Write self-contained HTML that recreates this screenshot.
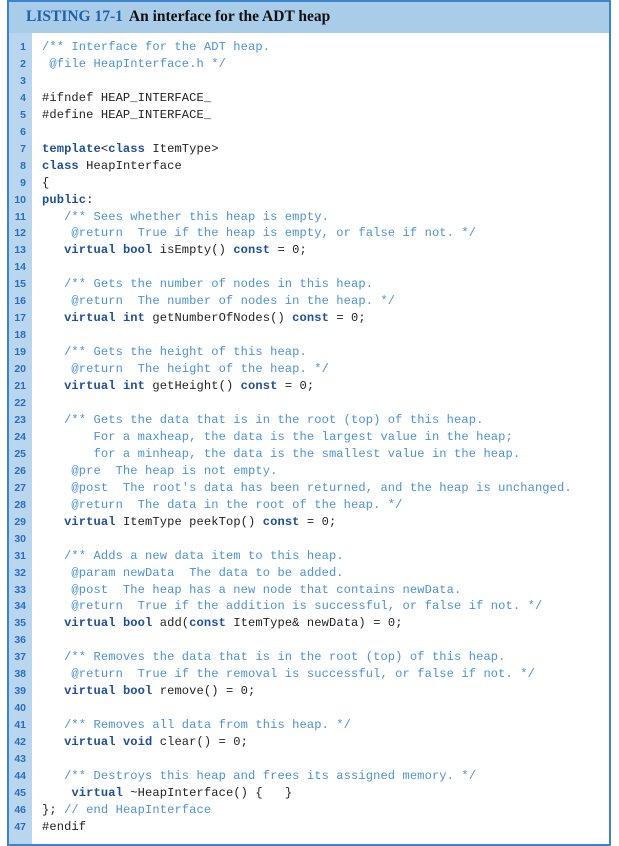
<!DOCTYPE html>
<html><head><meta charset="utf-8"><style>
html,body{margin:0;padding:0;background:#fff;}
body{width:619px;height:845px;position:relative;overflow:hidden;}
.frame{position:absolute;left:7px;top:0;width:600px;height:842px;border:2px solid #3d84cf;background:#fff;}
.hdr{position:absolute;left:0;top:0;right:0;height:31px;background:#a9cde9;}
.hdr span{position:absolute;left:17px;top:6px;font:bold 15.5px "Liberation Serif",serif;color:#1f5fae;white-space:nowrap;}
.hdr b{color:#111;margin-left:6px;}
.gut{position:absolute;left:0;top:31px;width:23px;bottom:0;background:#b9d6ee;}
.nums{position:absolute;left:0;top:37px;width:17px;text-align:right;font:bold 10.5px "Liberation Sans",sans-serif;color:#2a6dbf;line-height:16.96px;}
pre{position:absolute;left:33px;top:37px;margin:0;font:12.1px "Liberation Mono",monospace;letter-spacing:0.1px;line-height:16.96px;color:#222;}
.c{color:#4b93d6;}
.k{color:#1d4f9a;font-weight:bold;}
</style></head><body>
<div class="frame">
<div class="hdr"><span>LISTING 17-1<b>An interface for the ADT heap</b></span></div>
<div class="gut"></div>
<div class="nums">1<br>2<br>3<br>4<br>5<br>6<br>7<br>8<br>9<br>10<br>11<br>12<br>13<br>14<br>15<br>16<br>17<br>18<br>19<br>20<br>21<br>22<br>23<br>24<br>25<br>26<br>27<br>28<br>29<br>30<br>31<br>32<br>33<br>34<br>35<br>36<br>37<br>38<br>39<br>40<br>41<br>42<br>43<br>44<br>45<br>46<br>47</div>
<pre><span class="c">/** Interface for the ADT heap.
 @file HeapInterface.h */</span>

#ifndef HEAP_INTERFACE_
#define HEAP_INTERFACE_

<span class="k">template</span>&lt;<span class="k">class</span> ItemType&gt;
<span class="k">class</span> HeapInterface
{
<span class="k">public</span>:
   <span class="c">/** Sees whether this heap is empty.
    @return  True if the heap is empty, or false if not. */</span>
   <span class="k">virtual bool</span> isEmpty() <span class="k">const</span> = 0;

   <span class="c">/** Gets the number of nodes in this heap.
    @return  The number of nodes in the heap. */</span>
   <span class="k">virtual int</span> getNumberOfNodes() <span class="k">const</span> = 0;

   <span class="c">/** Gets the height of this heap.
    @return  The height of the heap. */</span>
   <span class="k">virtual int</span> getHeight() <span class="k">const</span> = 0;

   <span class="c">/** Gets the data that is in the root (top) of this heap.
       For a maxheap, the data is the largest value in the heap;
       for a minheap, the data is the smallest value in the heap.
    @pre  The heap is not empty.
    @post  The root's data has been returned, and the heap is unchanged.
    @return  The data in the root of the heap. */</span>
   <span class="k">virtual</span> ItemType peekTop() <span class="k">const</span> = 0;

   <span class="c">/** Adds a new data item to this heap.
    @param newData  The data to be added.
    @post  The heap has a new node that contains newData.
    @return  True if the addition is successful, or false if not. */</span>
   <span class="k">virtual bool</span> add(<span class="k">const</span> ItemType&amp; newData) = 0;

   <span class="c">/** Removes the data that is in the root (top) of this heap.
    @return  True if the removal is successful, or false if not. */</span>
   <span class="k">virtual bool</span> remove() = 0;

   <span class="c">/** Removes all data from this heap. */</span>
   <span class="k">virtual void</span> clear() = 0;

   <span class="c">/** Destroys this heap and frees its assigned memory. */</span>
    <span class="k">virtual</span> ~HeapInterface() {   }
}; <span class="c">// end HeapInterface</span>
#endif</pre>
</div>
</body></html>
